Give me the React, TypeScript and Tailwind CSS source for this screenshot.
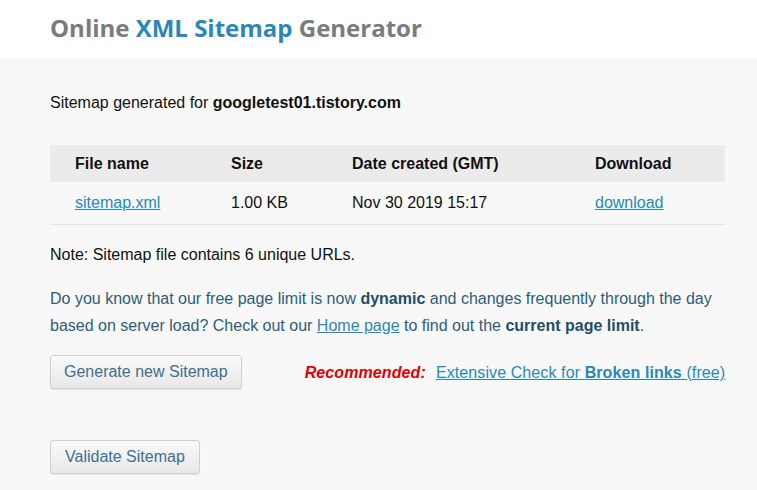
export default function App() {
  return (
    <div className="w-[757px] h-[490px] overflow-hidden bg-[#f8f8f8]" style={{ fontFamily: "'Liberation Sans', Arial, sans-serif" }}>
      {/* header */}
      <div className="h-[58px] bg-white flex items-center pl-[50px]">
        <h1
          className="text-[24px] font-bold text-[#7b7b7b] pb-[2px]"
          style={{ fontFamily: "'Open Sans', sans-serif" }}
        >
          Online <span className="text-[#2a88b7]">XML Sitemap</span> Generator
        </h1>
      </div>

      {/* body */}
      <div className="pl-[50px] pt-[34px] whitespace-nowrap">
        <p className="text-[16px] text-[#111] leading-[22px]">
          Sitemap generated for <b>googletest01.tistory.com</b>
        </p>

        <div className="mt-[31px] w-[675px]">
          <div className="flex h-[37px] items-center bg-[#ebebeb] text-[16px] font-bold text-[#111]">
            <div className="w-[181px] pl-[25px]">File name</div>
            <div className="w-[121px]">Size</div>
            <div className="w-[243px]">Date created (GMT)</div>
            <div>Download</div>
          </div>
          <div className="flex h-[43px] items-center border-b border-[#e6e6e6] text-[16px] text-[#111]">
            <div className="w-[181px] pl-[25px]">
              <a href="#" className="text-[#2a88b7] underline">sitemap.xml</a>
            </div>
            <div className="w-[121px]">1.00 KB</div>
            <div className="w-[243px]">Nov 30 2019 15:17</div>
            <div>
              <a href="#" className="text-[#2a88b7] underline">download</a>
            </div>
          </div>
        </div>

        <p className="mt-[19px] text-[16px] text-[#111] leading-[22px]">
          Note: Sitemap file contains 6 unique URLs.
        </p>

        <p className="mt-[19px] text-[16px] leading-[27px] text-[#2e5d78]">
          Do you know that our free page limit is now <b className="text-[#1f4e68]">dynamic</b> and changes frequently through the day
          <br />
          based on server load? Check out our{" "}
          <a href="#" className="text-[#2a88b7] underline">Home page</a> to find out the{" "}
          <b className="text-[#1f4e68]">current page limit</b>.
        </p>

        <div className="mt-[16px] flex items-center">
          <button className="h-[34px] px-[13px] rounded-[3px] border border-[#cfcfcf] bg-gradient-to-b from-[#fafafa] to-[#e8e8e8] text-[16px] text-[#3f6f8f] shadow-[0_1px_1px_rgba(0,0,0,0.08)]">
            Generate new Sitemap
          </button>
          <div className="ml-[63px] text-[16px] pt-[2px]">
            <i className="font-bold text-[#e00000] tracking-[0.1px]">Recommended:</i>
            <a href="#" className="ml-[10px] text-[#2a88b7] underline tracking-[0.1px]">
              Extensive Check for <b>Broken links</b> (free)
            </a>
          </div>
        </div>

        <div className="mt-[51px]">
          <button className="h-[34px] px-[14px] rounded-[3px] border border-[#cfcfcf] bg-gradient-to-b from-[#fafafa] to-[#e8e8e8] text-[16px] text-[#3f6f8f] shadow-[0_1px_1px_rgba(0,0,0,0.08)]">
            Validate Sitemap
          </button>
        </div>
      </div>
    </div>
  );
}
